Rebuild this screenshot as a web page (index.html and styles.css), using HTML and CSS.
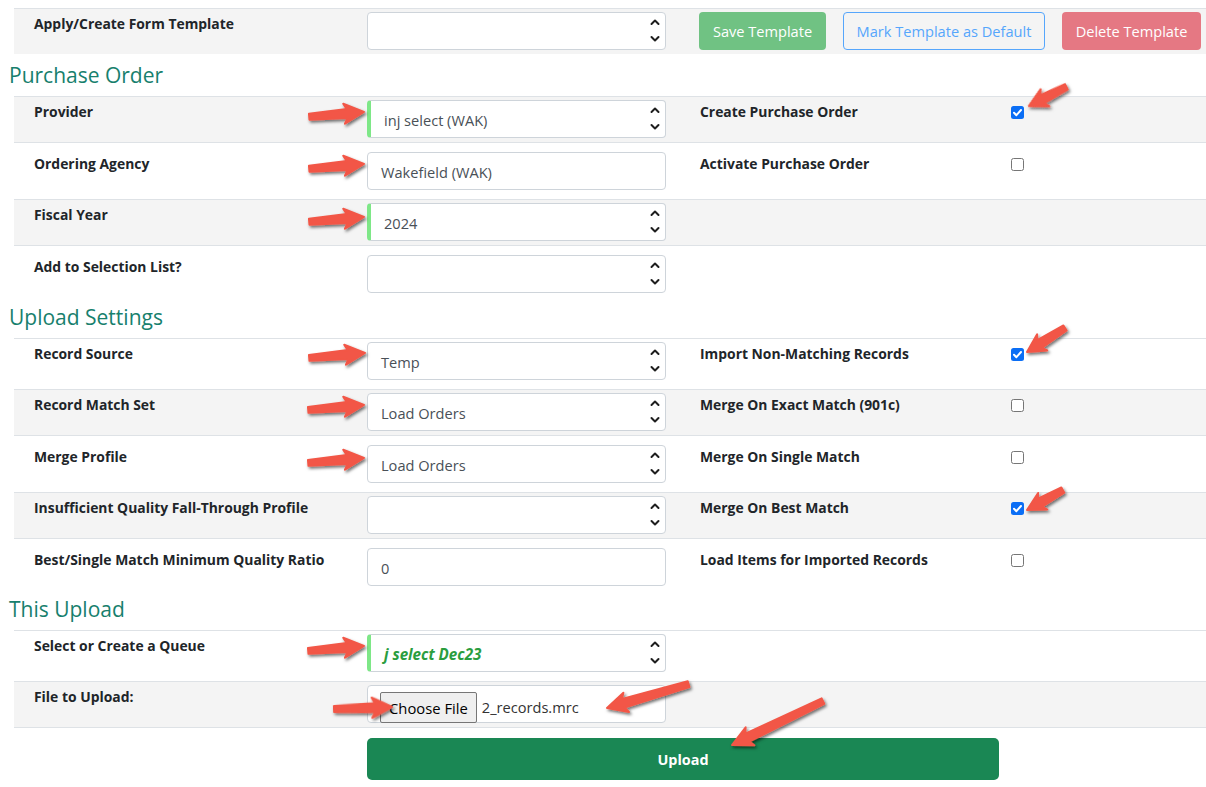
FILE: index.html
```html
<!DOCTYPE html>
<html lang="en">
<head>
  <meta charset="UTF-8" />
  <title>MARC Order Record Upload</title>
  <link rel="stylesheet" href="styles.css">
</head>
<body>
<div class="page">
  <div class="form">

    <div class="table">
      <div class="row striped">
        <div class="cell label">Apply/Create Form Template</div>
        <div class="cell">
          <div class="field select">
            <span></span>
            <svg class="spin" width="10" height="24" viewBox="0 0 10 24"><polyline points="1.5,5 5,1.5 8.5,5"/><polyline points="1.5,18 5,21.5 8.5,18"/></svg>
          </div>
        </div>
        <div class="cell actions">
          <div class="btn btn-save">Save Template</div>
          <div class="btn btn-mark">Mark Template as Default</div>
          <div class="btn btn-delete">Delete Template</div>
        </div>
      </div>
    </div>

    <h2>Purchase Order</h2>
    <div class="table">
      <div class="row striped">
        <div class="cell label">Provider</div>
        <div class="cell">
          <div class="field select required">
            <span>inj select (WAK)</span>
            <svg class="spin" width="10" height="24" viewBox="0 0 10 24"><polyline points="1.5,5 5,1.5 8.5,5"/><polyline points="1.5,18 5,21.5 8.5,18"/></svg>
          </div>
        </div>
        <div class="cell label">Create Purchase Order</div>
        <div class="cell check-cell"><span class="check on"><svg width="13" height="13" viewBox="0 0 13 13"><polyline points="3,6.8 5.4,9.2 10,4"/></svg></span></div>
      </div>
      <div class="row sp-top sp-bot">
        <div class="cell label">Ordering Agency</div>
        <div class="cell"><div class="field">Wakefield (WAK)</div></div>
        <div class="cell label">Activate Purchase Order</div>
        <div class="cell check-cell"><span class="check"></span></div>
      </div>
      <div class="row striped">
        <div class="cell label">Fiscal Year</div>
        <div class="cell">
          <div class="field select required">
            <span>2024</span>
            <svg class="spin" width="10" height="24" viewBox="0 0 10 24"><polyline points="1.5,5 5,1.5 8.5,5"/><polyline points="1.5,18 5,21.5 8.5,18"/></svg>
          </div>
        </div>
        <div class="cell"></div>
        <div class="cell"></div>
      </div>
      <div class="row sp-top tight-bot">
        <div class="cell label">Add to Selection List?</div>
        <div class="cell">
          <div class="field select">
            <span></span>
            <svg class="spin" width="10" height="24" viewBox="0 0 10 24"><polyline points="1.5,5 5,1.5 8.5,5"/><polyline points="1.5,18 5,21.5 8.5,18"/></svg>
          </div>
        </div>
        <div class="cell"></div>
        <div class="cell"></div>
      </div>
    </div>

    <h2>Upload Settings</h2>
    <div class="table">
      <div class="row sp-bot">
        <div class="cell label">Record Source</div>
        <div class="cell">
          <div class="field select">
            <span>Temp</span>
            <svg class="spin" width="10" height="24" viewBox="0 0 10 24"><polyline points="1.5,5 5,1.5 8.5,5"/><polyline points="1.5,18 5,21.5 8.5,18"/></svg>
          </div>
        </div>
        <div class="cell label">Import Non-Matching Records</div>
        <div class="cell check-cell"><span class="check on"><svg width="13" height="13" viewBox="0 0 13 13"><polyline points="3,6.8 5.4,9.2 10,4"/></svg></span></div>
      </div>
      <div class="row striped">
        <div class="cell label">Record Match Set</div>
        <div class="cell">
          <div class="field select">
            <span>Load Orders</span>
            <svg class="spin" width="10" height="24" viewBox="0 0 10 24"><polyline points="1.5,5 5,1.5 8.5,5"/><polyline points="1.5,18 5,21.5 8.5,18"/></svg>
          </div>
        </div>
        <div class="cell label">Merge On Exact Match (901c)</div>
        <div class="cell check-cell"><span class="check"></span></div>
      </div>
      <div class="row sp-top sp-bot">
        <div class="cell label">Merge Profile</div>
        <div class="cell">
          <div class="field select">
            <span>Load Orders</span>
            <svg class="spin" width="10" height="24" viewBox="0 0 10 24"><polyline points="1.5,5 5,1.5 8.5,5"/><polyline points="1.5,18 5,21.5 8.5,18"/></svg>
          </div>
        </div>
        <div class="cell label">Merge On Single Match</div>
        <div class="cell check-cell"><span class="check"></span></div>
      </div>
      <div class="row striped">
        <div class="cell label">Insufficient Quality Fall-Through Profile</div>
        <div class="cell">
          <div class="field select">
            <span></span>
            <svg class="spin" width="10" height="24" viewBox="0 0 10 24"><polyline points="1.5,5 5,1.5 8.5,5"/><polyline points="1.5,18 5,21.5 8.5,18"/></svg>
          </div>
        </div>
        <div class="cell label">Merge On Best Match</div>
        <div class="cell check-cell"><span class="check on"><svg width="13" height="13" viewBox="0 0 13 13"><polyline points="3,6.8 5.4,9.2 10,4"/></svg></span></div>
      </div>
      <div class="row sp-top">
        <div class="cell label">Best/Single Match Minimum Quality Ratio</div>
        <div class="cell"><div class="field">0</div></div>
        <div class="cell label">Load Items for Imported Records</div>
        <div class="cell check-cell"><span class="check"></span></div>
      </div>
    </div>

    <h2 class="h-short">This Upload</h2>
    <div class="table">
      <div class="row sp-bot">
        <div class="cell label">Select or Create a Queue</div>
        <div class="cell">
          <div class="field select required">
            <span class="queue">j select Dec23</span>
            <svg class="spin" width="10" height="24" viewBox="0 0 10 24"><polyline points="1.5,5 5,1.5 8.5,5"/><polyline points="1.5,18 5,21.5 8.5,18"/></svg>
          </div>
        </div>
        <div class="cell"></div>
        <div class="cell"></div>
      </div>
      <div class="row striped">
        <div class="cell label">File to Upload:</div>
        <div class="cell">
          <div class="field file">
            <span class="file-btn">Choose File</span>
            <span class="file-name">2_records.mrc</span>
          </div>
        </div>
        <div class="cell"></div>
        <div class="cell"></div>
      </div>
      <div class="row upload-row">
        <div class="cell"></div>
        <div class="cell upload-cell"><div class="btn-upload">Upload</div></div>
      </div>
    </div>

  </div>

  <!-- screenshot annotations -->
  <svg class="annotations" width="1206" height="787" viewBox="0 0 1206 787">
    <defs>
      <filter id="shadow" x="-30%" y="-60%" width="160%" height="220%">
        <feDropShadow dx="1.5" dy="2" stdDeviation="1.4" flood-color="#000" flood-opacity="0.55"/>
      </filter>
    </defs>
    <g class="arrows" filter="url(#shadow)">
      <g transform="translate(364,112) rotate(-5)"><path d="M-55,-3 L-17,-4.5 L-20,-10 L0,0 L-20,10 L-17,4.5 L-55,3 Z"/></g>
      <g transform="translate(364,164) rotate(-5)"><path d="M-55,-3 L-17,-4.5 L-20,-10 L0,0 L-20,10 L-17,4.5 L-55,3 Z"/></g>
      <g transform="translate(364,217) rotate(-5)"><path d="M-55,-3 L-17,-4.5 L-20,-10 L0,0 L-20,10 L-17,4.5 L-55,3 Z"/></g>
      <g transform="translate(365,353) rotate(-5)"><path d="M-56,-3 L-17,-4.5 L-20,-10 L0,0 L-20,10 L-17,4.5 L-56,3 Z"/></g>
      <g transform="translate(364,405) rotate(-5)"><path d="M-56,-3 L-17,-4.5 L-20,-10 L0,0 L-20,10 L-17,4.5 L-56,3 Z"/></g>
      <g transform="translate(364,458) rotate(-5)"><path d="M-56,-3 L-17,-4.5 L-20,-10 L0,0 L-20,10 L-17,4.5 L-56,3 Z"/></g>
      <g transform="translate(364,646) rotate(-5)"><path d="M-56,-3 L-17,-4.5 L-20,-10 L0,0 L-20,10 L-17,4.5 L-56,3 Z"/></g>
      <g transform="translate(392,707) rotate(-2)"><path d="M-58,-3 L-17,-4.5 L-20,-10 L0,0 L-20,10 L-17,4.5 L-58,3 Z"/></g>
      <g transform="translate(607,708) rotate(163.7)"><path d="M-85,-3 L-17,-4.5 L-20,-10 L0,0 L-20,10 L-17,4.5 L-85,3 Z"/></g>
      <g transform="translate(732,745) rotate(154.2)"><path d="M-101,-3 L-17,-4.5 L-20,-10 L0,0 L-20,10 L-17,4.5 L-101,3 Z"/></g>
      <g transform="translate(1029,106) rotate(152.8)"><path d="M-42,-3 L-15,-4.5 L-18,-9.5 L0,0 L-18,9.5 L-15,4.5 L-42,3 Z"/></g>
      <g transform="translate(1027,352) rotate(147.7)"><path d="M-45,-3 L-15,-4.5 L-18,-9.5 L0,0 L-18,9.5 L-15,4.5 L-45,3 Z"/></g>
      <g transform="translate(1027,510) rotate(150.9)"><path d="M-41,-3 L-15,-4.5 L-18,-9.5 L0,0 L-18,9.5 L-15,4.5 L-41,3 Z"/></g>
    </g>
  </svg>
</div>
</body>
</html>
```

FILE: styles.css
```css
body {
  margin: 0;
  font-family: 'Open Sans', 'Liberation Sans', sans-serif;
  color: #212529;
  background: white;
}

.page {
  position: relative;
  width: 1206px;
  height: 787px;
  overflow: hidden;
}

.form {
  padding: 8px 0 0 9px;
}

h2 {
  margin: 0;
  padding: 9px 0 8px;
  font-size: 21px;
  line-height: 25px;
  font-weight: 400;
  color: #17806d;
}

h2.h-short {
  padding: 7px 0 8px;
}

.table {
  margin-left: 5px;
}

.row {
  display: grid;
  grid-template-columns: 341px 325px 315px 1fr;
  align-items: start;
  border-top: 1px solid #dee2e6;
  padding: 3px 0 4px;
}

.row.striped {
  background-color: #f4f4f4;
}

.row.sp-top { padding-top: 9px; }
.row.sp-bot { padding-bottom: 9px; }
.row.tight-bot { padding-bottom: 3px; }

.cell.label {
  padding: 2px 0 0 20px;
  font-size: 13.9px;
  line-height: 20px;
  font-weight: 700;
}

.cell:nth-child(2) {
  padding-left: 12px;
}

.field {
  box-sizing: border-box;
  width: 299px;
  height: 38px;
  border: 1px solid #ced4da;
  border-radius: 4px;
  background: white;
  display: flex;
  align-items: center;
  padding: 1px 13px 0;
  font-size: 14.6px;
  color: #495057;
}

.field.select {
  justify-content: space-between;
  padding-right: 5px;
}

.field.required {
  border-left: 4px solid #7ee787;
  padding-left: 13px;
}

.spin {
  margin-top: -1px;
}

.spin polyline {
  fill: none;
  stroke: #1e1e1e;
  stroke-width: 2;
  stroke-linecap: round;
  stroke-linejoin: round;
}

.queue {
  font-weight: 700;
  font-style: italic;
  font-size: 15.2px;
  color: #2a9d3e;
}

.field.file {
  padding: 6px 0 0 12px;
  color: #333;
  font-size: 14.6px;
}

.file-btn {
  box-sizing: border-box;
  height: 31px;
  padding: 1px 8px 0;
  display: flex;
  align-items: center;
  background: #efefef;
  border: 1px solid #767676;
  border-radius: 2px;
  font-size: 14.8px;
  color: #000;
}

.file-name {
  margin-left: 5px;
}

.check-cell {
  padding: 6px 0 0 16px;
}

.check {
  display: block;
  box-sizing: border-box;
  width: 13px;
  height: 13px;
  border: 1px solid #767676;
  border-radius: 2.5px;
  background: white;
}

.check.on {
  border: none;
  background: #0b6ef5;
}

.check svg {
  display: block;
}

.check polyline {
  fill: none;
  stroke: white;
  stroke-width: 2;
  stroke-linecap: round;
  stroke-linejoin: round;
}

.actions {
  grid-column: 3 / 5;
  display: flex;
  gap: 17px;
  padding-left: 19px;
}

.btn {
  box-sizing: border-box;
  flex-shrink: 0;
  height: 38px;
  display: flex;
  align-items: center;
  justify-content: center;
  white-space: nowrap;
  border-radius: 4px;
  font-size: 14.6px;
  color: white;
  border: 1px solid transparent;
}

.btn-save {
  width: 127px;
  background-color: #70c283;
}

.btn-mark {
  width: 202px;
  border-color: #56a6fc;
  color: #56a6fc;
}

.btn-delete {
  width: 139px;
  background-color: #e57883;
}

.upload-row {
  padding-top: 10px;
  grid-template-columns: 341px 1fr;
}

.btn-upload {
  width: 632px;
  height: 42px;
  border-radius: 5px;
  background-color: #1a8754;
  color: white;
  font-weight: 700;
  font-size: 14.4px;
  display: flex;
  align-items: center;
  justify-content: center;
}

.annotations {
  position: absolute;
  top: 0;
  left: 0;
  pointer-events: none;
}

.arrows path {
  fill: #f25746;
  stroke: #f25746;
  stroke-width: 2;
  stroke-linejoin: round;
}
```
